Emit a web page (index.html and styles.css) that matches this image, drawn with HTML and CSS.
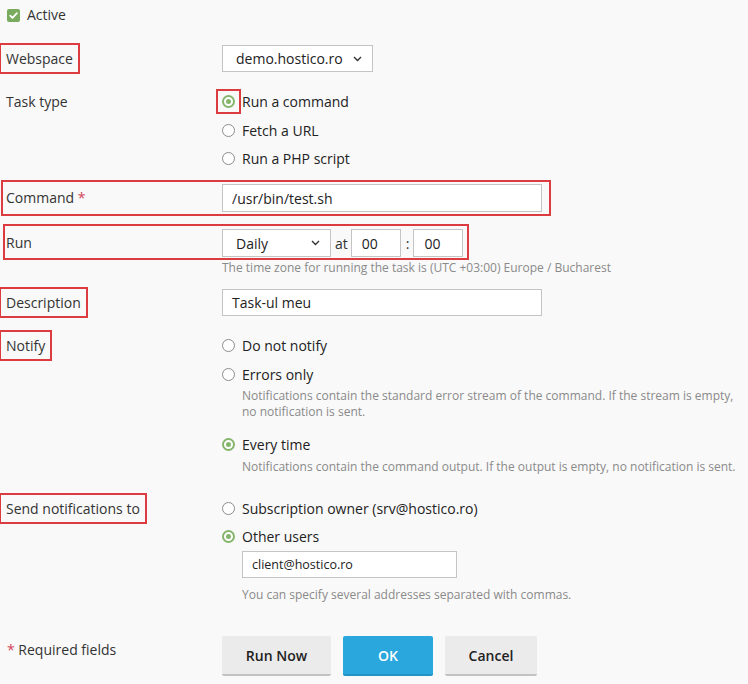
FILE: index.html
```html
<!DOCTYPE html>
<html lang="en">
<head>
<meta charset="utf-8">
<title>Scheduled task</title>
<link rel="stylesheet" href="styles.css">
</head>
<body>
<form class="form">
  <div class="row row-active">
    <span class="checkbox"><svg width="13" height="13" viewBox="0 0 13 13"><path d="M3.2 6.6 L5.5 8.9 L9.9 4.2" fill="none" stroke="#fff" stroke-width="1.8" stroke-linecap="round" stroke-linejoin="round"/></svg></span>
    <span class="check-text">Active</span>
  </div>

  <div class="row row-webspace">
    <div class="label"><span class="hl hl-webspace">Webspace</span></div>
    <div class="control">
      <div class="select select-webspace"><span>demo.hostico.ro</span><svg class="chev" width="9" height="6" viewBox="0 0 9 6"><path d="M1 1 L4.5 4.5 L8 1" fill="none" stroke="#333" stroke-width="1.4"/></svg></div>
    </div>
  </div>

  <div class="row row-task">
    <div class="label">Task type</div>
    <div class="control">
      <div class="radio-line line-first"><span class="hl-radio"><span class="radio checked"></span></span><span>Run a command</span></div>
      <div class="radio-line"><span class="radio"></span><span>Fetch a URL</span></div>
      <div class="radio-line"><span class="radio"></span><span>Run a PHP script</span></div>
    </div>
  </div>

  <div class="row row-command boxed boxed-command">
    <div class="label">Command <span class="req">*</span></div>
    <div class="control">
      <div class="input input-command">/usr/bin/test.sh</div>
    </div>
  </div>

  <div class="row row-run boxed boxed-run">
    <div class="label">Run</div>
    <div class="control run-control">
      <div class="select select-daily"><span>Daily</span><svg class="chev" width="9" height="6" viewBox="0 0 9 6"><path d="M1 1 L4.5 4.5 L8 1" fill="none" stroke="#333" stroke-width="1.4"/></svg></div>
      <span class="at">at</span>
      <div class="input input-time">00</div>
      <span class="colon">:</span>
      <div class="input input-time">00</div>
    </div>
  </div>
  <div class="row row-tz">
    <div class="label"></div>
    <div class="hint">The time zone for running the task is (UTC +03:00) Europe / Bucharest</div>
  </div>

  <div class="row row-desc">
    <div class="label"><span class="hl hl-desc">Description</span></div>
    <div class="control">
      <div class="input input-desc">Task-ul meu</div>
    </div>
  </div>

  <div class="row row-notify">
    <div class="label"><span class="hl hl-notify">Notify</span></div>
    <div class="control">
      <div class="radio-line"><span class="radio"></span><span>Do not notify</span></div>
      <div class="radio-line"><span class="radio"></span><span>Errors only</span></div>
      <div class="hint sub-hint">Notifications contain the standard error stream of the command. If the stream is empty,<br>no notification is sent.</div>
      <div class="radio-line every"><span class="radio checked"></span><span>Every time</span></div>
      <div class="hint sub-hint hint-every">Notifications contain the command output. If the output is empty, no notification is sent.</div>
    </div>
  </div>

  <div class="row row-send">
    <div class="label"><span class="hl hl-send">Send notifications to</span></div>
    <div class="control">
      <div class="radio-line"><span class="radio"></span><span>Subscription owner (srv@hostico.ro)</span></div>
      <div class="radio-line"><span class="radio checked"></span><span>Other users</span></div>
      <div class="input input-email">client@hostico.ro</div>
      <div class="hint sub-hint hint-email">You can specify several addresses separated with commas.</div>
    </div>
  </div>

  <div class="row row-buttons">
    <div class="label required"><span class="req">*</span> Required fields</div>
    <div class="buttons">
      <button type="button" class="btn btn-run">Run Now</button>
      <button type="button" class="btn btn-ok">OK</button>
      <button type="button" class="btn btn-cancel">Cancel</button>
    </div>
  </div>
</form>
</body>
</html>
```

FILE: styles.css
```css
html, body {
  margin: 0;
  padding: 0;
  background: #f9f9f9;
}
body {
  font-family: "Open Sans", "Noto Sans", sans-serif;
  font-size: 14px;
  color: #333;
}
.form {
  padding: 5px 0 0 6px;
  width: 742px;
  box-sizing: border-box;
}
.row {
  display: flex;
  align-items: flex-start;
  position: relative;
}
.label {
  width: 216px;
  flex-shrink: 0;
  line-height: 28px;
  color: #333;
}
.control {
  display: flex;
  flex-direction: column;
}

/* highlight boxes drawn over labels */
.hl {
  outline: 2px solid #dc3b3f;
  outline-offset: 0;
  padding: 4px 5px;
  margin: 0 -5px;
}
.boxed::before {
  content: "";
  position: absolute;
  border: 2px solid #dc3b3f;
  pointer-events: none;
}
.boxed-command::before {
  left: -5px;
  top: -4px;
  width: 546px;
  height: 32px;
}
.boxed-run::before {
  left: -3px;
  top: -5px;
  width: 462px;
  height: 32px;
}
.hl-radio {
  display: inline-flex;
  align-items: center;
  justify-content: center;
  outline: 2px solid #dc3b3f;
  width: 21px;
  height: 21px;
  margin: 0 -4px 0 -4px;
}
.line-first {
  margin-top: -1px;
  margin-bottom: 1px;
}

/* Active */
.row-active {
  height: 20px;
  align-items: center;
}
.checkbox {
  width: 13px;
  height: 13px;
  background: #79ab5f;
  border-radius: 2px;
  margin-left: 1px;
  display: inline-flex;
}
.check-text {
  margin-left: 7px;
  line-height: 20px;
}

/* Webspace */
.row-webspace {
  margin-top: 20px;
}
.row-webspace .label {
  line-height: 27px;
}
.select {
  height: 27px;
  box-sizing: border-box;
  border: 1px solid #c4c4c4;
  background: #fff;
  display: flex;
  align-items: center;
  justify-content: space-between;
  padding: 0 10px 0 13px;
  color: #222;
}
.select-webspace {
  width: 151px;
}
.select-daily {
  width: 109px;
  height: 28px;
}

/* radios */
.row-task {
  margin-top: 16px;
}
.radio-line {
  height: 28px;
  display: flex;
  align-items: center;
  color: #222;
}
.radio {
  width: 13px;
  height: 13px;
  box-sizing: border-box;
  border: 1.5px solid #8c8c8c;
  border-radius: 50%;
  background: #fff;
  margin-right: 7px;
  flex-shrink: 0;
  position: relative;
}
.hl-radio .radio {
  margin-right: 0;
}
.hl-radio + span {
  margin-left: 7px;
}
.radio.checked {
  border: 2px solid #85b56c;
}
.radio.checked::after {
  content: "";
  position: absolute;
  left: 2px;
  top: 2px;
  width: 5px;
  height: 5px;
  border-radius: 50%;
  background: #85b56c;
}

/* inputs */
.input {
  box-sizing: border-box;
  border: 1px solid #c4c4c4;
  background: #fff;
  color: #222;
  display: flex;
  align-items: center;
}
.row-command {
  margin-top: 12px;
}
.row-command .label {
  line-height: 27px;
}
.input-command {
  width: 320px;
  height: 28px;
  padding-left: 9px;
}
.req {
  color: #d2455c;
}

.row-run {
  margin-top: 17px;
}
.run-control {
  flex-direction: row;
  align-items: center;
}
.at {
  margin: 0 3px 0 4px;
}
.input-time {
  width: 50px;
  height: 28px;
  padding-left: 10px;
}
.colon {
  margin: 0 4px 0 5px;
}

.hint {
  font-size: 12px;
  line-height: 16px;
  color: #8a8a8a;
}
.row-tz {
  margin-top: 3px;
}

.row-desc {
  margin-top: 13px;
}
.row-desc .label {
  line-height: 27px;
}
.input-desc {
  width: 320px;
  height: 27px;
  padding-left: 9px;
}

.row-notify {
  margin-top: 16px;
}
.row-notify .radio-line:first-child {
  margin-top: -1px;
  margin-bottom: 1px;
}
.sub-hint {
  margin-left: 20px;
}
.every {
  margin-top: 10px;
}
.hint-every {
  margin-top: 1px;
}

.row-send {
  margin-top: 19px;
}
.row-send .label {
  line-height: 30px;
}
.input-email {
  margin-left: 20px;
  margin-top: 1px;
  width: 215px;
  height: 27px;
  padding-left: 9px;
  font-size: 12.5px;
}
.hint-email {
  margin-top: 9px;
}

.row-buttons {
  margin-top: 33px;
}
.required {
  line-height: 28px;
}
.required .req {
  margin-left: 1px;
}
.buttons {
  display: flex;
  gap: 12px;
}
.btn {
  height: 40px;
  box-sizing: border-box;
  border: 0;
  border-bottom: 2px solid #c2c2c2;
  border-radius: 2px;
  background: #ebebeb;
  color: #222;
  font-family: "Open Sans", "Noto Sans", sans-serif;
  font-size: 14px;
  font-weight: 600;
  padding: 0 22px;
  margin: 0;
}
.btn-run {
  width: 109px;
}
.btn-ok {
  width: 90px;
  background: #2aa7dd;
  border-bottom-color: #2293c6;
  color: #fff;
}
.btn-cancel {
  width: 92px;
}
```
